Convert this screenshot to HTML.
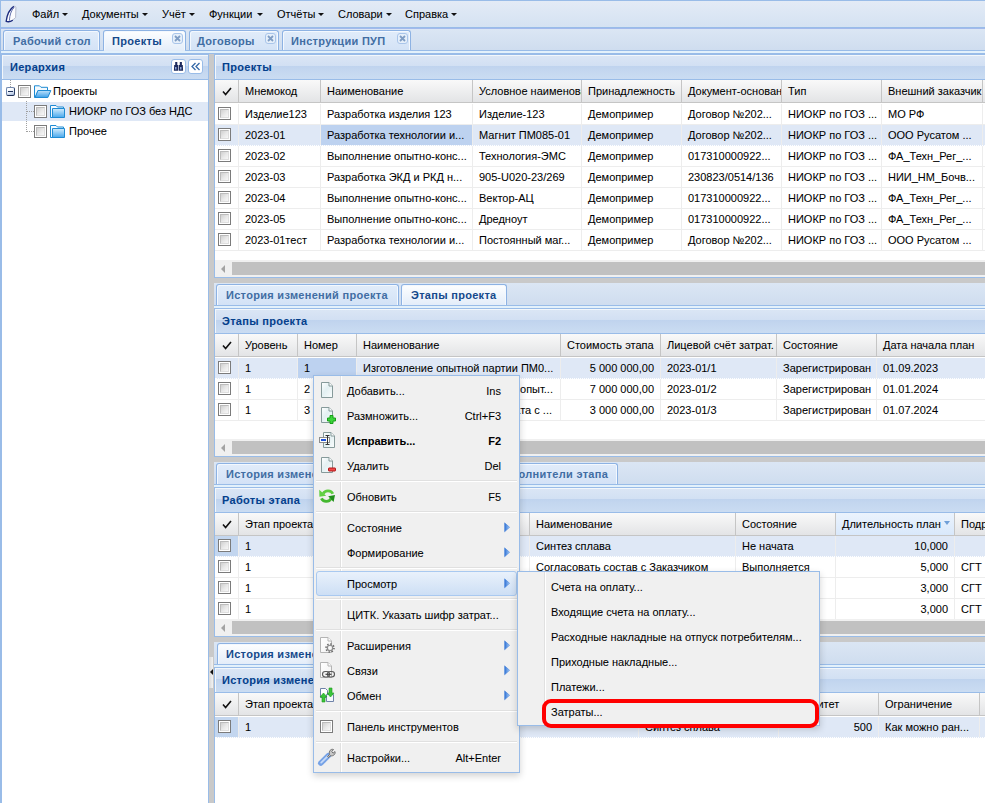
<!DOCTYPE html><html><head><meta charset="utf-8"><style>
*{box-sizing:border-box}
html,body{margin:0;padding:0}
body{width:985px;height:803px;overflow:hidden;position:relative;background:#fff;
 font-family:"Liberation Sans",sans-serif;font-size:11px;color:#000}
.a{position:absolute}
.t{position:absolute;white-space:nowrap;line-height:13px;-webkit-text-stroke-width:0.05px}
.b{font-weight:bold;letter-spacing:0.3px}
/* toolbar */
#tb{left:0;top:0;width:985px;height:28px;border-top:1px solid #99bce8;border-left:1px solid #99bce8;border-bottom:1px solid #99bce8;
 background:linear-gradient(#e3ebf6,#d5e2f2)}
.mi{color:#000}
.arr{position:absolute;width:0;height:0;border-left:3px solid transparent;border-right:3px solid transparent;border-top:3px solid #111}
/* tab bar */
.tbar{position:absolute;left:214px;width:771px;height:22px;background:linear-gradient(#dbe6f4,#cfddef)}
.tab{position:absolute;height:21px;border:1px solid #8db2e3;border-bottom:0;border-radius:3px 3px 0 0;
 background:linear-gradient(#e1ecfa,#d3e2f6);box-shadow:inset 1px 1px 0 #f3f8fe,inset -1px 0 0 #f3f8fe}
.tab.act{background:linear-gradient(#fdfeff,#e2ecf9);height:22px}
.tabt{position:absolute;top:4px;font-weight:bold;letter-spacing:0.3px;color:#416da3;white-space:nowrap;line-height:13px}
.tab.act .tabt{color:#15498b}
.close{position:absolute;width:11px;height:11px;border:1px solid #a9c5ea;border-radius:3px;background:#e6effa}
.strip{position:absolute;left:214px;width:771px;height:3px;border-top:1px solid #99bce8;background:#e3f1fb}
/* panel header */
.ph{position:absolute;height:26px;border:1px solid #99bce8;
 background:linear-gradient(#dbe6f5 0%,#d2e0f3 45%,#bfd3ee 46%,#c3d6ef 60%,#cadcf2 100%);
 box-shadow:inset 0 1px 0 #f3f7fb,inset 1px 0 0 #f3f7fb}
.pht{position:absolute;left:7px;top:6px;font-weight:bold;letter-spacing:0.3px;color:#04408c;line-height:13px;white-space:nowrap}
/* grid */
.gh{position:absolute;height:23px;background:linear-gradient(#f9f9f9,#e3e4e6);border-bottom:1px solid #c5c5c5}
.ghc{position:absolute;top:0;height:22px;border-right:1px solid #c5c5c5;overflow:hidden}
.ghc span{position:absolute;left:6px;top:5px;white-space:nowrap;line-height:13px;color:#000;-webkit-text-stroke-width:0.05px}
.row{position:absolute;height:21px;border-bottom:1px solid #ededed;background:#fff}
.row.sel{background:#dfe8f6;border-bottom:1px dotted #fff}
.cell{position:absolute;top:0;height:20px;border-right:1px solid #ededed;overflow:hidden}
.cell span{position:absolute;left:6px;top:4px;white-space:nowrap;line-height:13px;-webkit-text-stroke-width:0.05px}
.cell.r span{left:auto;right:6px}
.cell.fc{background:#c3d6ef}
.chk{position:absolute;width:13px;height:13px;border:1px solid #7b7b7b;background:#fff}
.chk::after{content:'';position:absolute;left:1px;top:1px;width:9px;height:9px;box-sizing:border-box;border:1px solid;border-color:#bcbcbc #dedede #dedede #bcbcbc;background:linear-gradient(135deg,#d0d0d0 0%,#e9e9e9 55%,#f7f7f7 100%)}
.hs{position:absolute;height:17px;background:#f0f0f0}
.hs .th{position:absolute;left:17px;right:0;top:2px;height:13px;background:#c1c1c1}
.hs .la{position:absolute;left:6px;top:5px;width:0;height:0;border-top:4px solid transparent;border-bottom:4px solid transparent;border-right:4px solid #a3a3a3}
/* menu */
.menu{position:absolute;background:#f0f0f0;border:1px solid #99bce8;box-shadow:0 3px 7px rgba(0,0,0,0.18)}
.msep{position:absolute;height:2px;border-top:1px solid #e0e0e0;background:#fff}
.mvs{position:absolute;width:2px;border-left:1px solid #e0e0e0;background:#fff}
.mt{position:absolute;white-space:nowrap;line-height:13px;color:#000;-webkit-text-stroke-width:0.05px}
.marr{position:absolute;width:0;height:0;border-top:4.5px solid transparent;border-bottom:4.5px solid transparent;border-left:5px solid #3d8ae0}
</style></head><body>
<div id="tb" class="a"></div>
<svg class="a" style="left:0;top:0" width="22" height="26" viewBox="0 0 22 26">
<path d="M14.8 6 C10.5 8.5 7.2 14.5 6 21.6 C8.5 22.3 11.5 21.6 15.6 17.5 L15.9 7.5 Z" fill="#fbfcfe" stroke="#a4abc0" stroke-width="0.8"/>
<path d="M13.8 6.4 C9.6 9.2 6.9 15.2 6.2 21.4 C8.2 22 10.8 21.6 12.8 20.3" fill="none" stroke="#1b2a7e" stroke-width="1.3"/>
<path d="M14.2 7.4 C11.2 10.2 9.6 15.2 9.4 20.6" fill="none" stroke="#5262a6" stroke-width="0.9"/>
</svg>
<div class="t mi" style="left:32px;top:8px;">Файл</div>
<div class="arr" style="left:62px;top:13px"></div>
<div class="t mi" style="left:82px;top:8px;">Документы</div>
<div class="arr" style="left:142px;top:13px"></div>
<div class="t mi" style="left:162px;top:8px;">Учёт</div>
<div class="arr" style="left:189px;top:13px"></div>
<div class="t mi" style="left:209px;top:8px;">Функции</div>
<div class="arr" style="left:257px;top:13px"></div>
<div class="t mi" style="left:277px;top:8px;">Отчёты</div>
<div class="arr" style="left:318px;top:13px"></div>
<div class="t mi" style="left:338px;top:8px;">Словари</div>
<div class="arr" style="left:386px;top:13px"></div>
<div class="t mi" style="left:405px;top:8px;">Справка</div>
<div class="arr" style="left:451px;top:13px"></div>
<div class="a" style="left:0;top:28px;width:985px;height:22px;background:linear-gradient(#dbe6f4,#cfddef);border-left:1px solid #99bce8;border-top:1px solid #a3b9ec"></div>
<div class="tab" style="left:3px;top:30px;width:97px">
<div class="tabt" style="left:9px">Рабочий стол</div>
</div>
<div class="tab act" style="left:103px;top:30px;width:83px">
<div class="tabt" style="left:8px">Проекты</div>
<div class="close" style="left:68px;top:2px"><svg width="9" height="9" style="position:absolute;left:0;top:0"><path d="M2 2L7 7M7 2L2 7" stroke="#7f9dc4" stroke-width="1.8"/></svg></div>
</div>
<div class="tab" style="left:189px;top:30px;width:90px">
<div class="tabt" style="left:7px">Договоры</div>
<div class="close" style="left:75px;top:2px"><svg width="9" height="9" style="position:absolute;left:0;top:0"><path d="M2 2L7 7M7 2L2 7" stroke="#7f9dc4" stroke-width="1.8"/></svg></div>
</div>
<div class="tab" style="left:282px;top:30px;width:129px">
<div class="tabt" style="left:8px">Инструкции ПУП</div>
<div class="close" style="left:114px;top:2px"><svg width="9" height="9" style="position:absolute;left:0;top:0"><path d="M2 2L7 7M7 2L2 7" stroke="#7f9dc4" stroke-width="1.8"/></svg></div>
</div>
<div class="a" style="left:0;top:50px;width:985px;height:4px;border-top:1px solid #99bce8;border-bottom:1px solid #99bce8;background:#e3f1fb;border-left:1px solid #99bce8"></div>
<div class="a" style="left:104px;top:50px;width:81px;height:1px;background:#e2ecf9"></div>
<div class="a" style="left:0;top:54px;width:209px;height:760px;border:1px solid #99bce8;border-left:2px solid #99bce8;background:#fff"></div>
<div class="ph" style="left:0;top:54px;width:209px;height:26px;border-left:2px solid #99bce8"></div>
<div class="t b" style="left:10px;top:61px;color:#04408c">Иерархия</div>
<div class="a" style="left:171px;top:59px;width:15px;height:15px;border:1px solid #99bce8;border-radius:3px;background:#fff"></div>
<div class="a" style="left:188px;top:59px;width:15px;height:15px;border:1px solid #99bce8;border-radius:3px;background:#fff"></div>
<svg class="a" style="left:173px;top:61px" width="11" height="11" viewBox="0 0 11 11">
<path d="M2.2 1 H4.3 V4 H5.3 V9.8 H0.9 L1.2 4 H2.2 Z" fill="#1e2b5e"/>
<path d="M6.8 1 H8.9 V4 H9.8 L10.1 9.8 H5.9 V4 H6.8 Z" fill="#1e2b5e"/>
<rect x="2.2" y="6" width="1.2" height="2.5" fill="#a9c3f5"/><rect x="7.2" y="6" width="1.2" height="2.5" fill="#a9c3f5"/>
</svg>
<svg class="a" style="left:191px;top:62px" width="10" height="9" viewBox="0 0 10 9">
<path d="M4.5 1 L1 4.5 L4.5 8 M8.5 1 L5 4.5 L8.5 8" fill="none" stroke="#3569a8" stroke-width="1.3"/>
</svg>
<div class="a" style="left:2px;top:102px;width:206px;height:19px;background:#dfe8f6"></div>
<div class="a" style="left:10px;top:80px;width:1px;height:7px;border-left:1px dotted #a0a0a0"></div>
<div class="a" style="left:26px;top:101px;width:1px;height:31px;border-left:1px dotted #a0a0a0"></div>
<div class="a" style="left:27px;top:111px;width:7px;height:1px;border-top:1px dotted #a0a0a0"></div>
<div class="a" style="left:27px;top:131px;width:7px;height:1px;border-top:1px dotted #a0a0a0"></div>
<div class="a" style="left:6px;top:87px;width:9px;height:9px;border:1px solid;border-color:#6f86ad #2b3f66 #1e2f55 #6f86ad;border-radius:2px;background:linear-gradient(160deg,#ffffff 20%,#dfe9f7 60%,#9fb4d6 100%)"></div>
<div class="a" style="left:8px;top:91px;width:5px;height:1px;background:#1b2f5a"></div>
<div class="chk" style="left:18px;top:85px"></div>
<svg class="a" style="left:34px;top:85px" width="18" height="14" viewBox="0 0 18 14">
<defs><linearGradient id="fo3485" x1="0" y1="0" x2="0" y2="1"><stop offset="0" stop-color="#bfe2fb"/><stop offset="1" stop-color="#3d9fe8"/></linearGradient></defs>
<path d="M0.5 0.8 H5.5 L7 2.3 H13.5 V5.5 H4 L1.5 12.5 H0.5 Z" fill="#f2f9fe" stroke="#1f8bd3"/>
<path d="M4 5.5 H16.8 L13.8 12.5 H1 Z" fill="url(#fo3485)" stroke="#1f8bd3" stroke-linejoin="round"/>
</svg>
<div class="t " style="left:53px;top:85px;">Проекты</div>
<div class="chk" style="left:34px;top:105px"></div>
<svg class="a" style="left:50px;top:105px" width="16" height="14" viewBox="0 0 16 14">
<defs><linearGradient id="fc50105" x1="0" y1="0" x2="0" y2="1"><stop offset="0" stop-color="#d2ecfd"/><stop offset="1" stop-color="#48a8ec"/></linearGradient></defs>
<path d="M0.5 0.5 H6 L7.5 2 H13.5 V12.5 H0.5 Z" fill="#f4faff" stroke="#1f8bd3" stroke-linejoin="round"/>
<path d="M2.5 3.5 H14.5 V12.5 H2.5 Z" fill="url(#fc50105)" stroke="#1f8bd3" stroke-linejoin="round"/>
</svg>
<div class="t " style="left:69px;top:105px;">НИОКР по ГОЗ без НДС</div>
<div class="chk" style="left:34px;top:125px"></div>
<svg class="a" style="left:50px;top:125px" width="16" height="14" viewBox="0 0 16 14">
<defs><linearGradient id="fc50125" x1="0" y1="0" x2="0" y2="1"><stop offset="0" stop-color="#d2ecfd"/><stop offset="1" stop-color="#48a8ec"/></linearGradient></defs>
<path d="M0.5 0.5 H6 L7.5 2 H13.5 V12.5 H0.5 Z" fill="#f4faff" stroke="#1f8bd3" stroke-linejoin="round"/>
<path d="M2.5 3.5 H14.5 V12.5 H2.5 Z" fill="url(#fc50125)" stroke="#1f8bd3" stroke-linejoin="round"/>
</svg>
<div class="t " style="left:69px;top:125px;">Прочее</div>
<div class="a" style="left:209px;top:54px;width:5px;height:749px;background:#c9c9c9"></div>
<div class="a" style="left:214px;top:54px;width:771px;height:224px;border-left:1px solid #99bce8;background:#fff"></div>
<div class="a" style="left:214px;top:277px;width:771px;height:1px;background:#99bce8"></div>
<div class="ph" style="left:214px;top:54px;width:771px;height:26px;border-right:0"></div>
<div class="t b" style="left:222px;top:61px;color:#04408c">Проекты</div>
<div class="gh" style="left:215px;top:80px;width:770px;height:23px">
<div class="ghc" style="left:24px;width:82px;height:22px;"><span>Мнемокод</span></div>
<div class="ghc" style="left:106px;width:152px;height:22px;"><span>Наименование</span></div>
<div class="ghc" style="left:258px;width:109px;height:22px;"><span>Условное наименование</span></div>
<div class="ghc" style="left:367px;width:100px;height:22px;"><span>Принадлежность</span></div>
<div class="ghc" style="left:467px;width:100px;height:22px;"><span>Документ-основание</span></div>
<div class="ghc" style="left:567px;width:100px;height:22px;"><span>Тип</span></div>
<div class="ghc" style="left:667px;width:101px;height:22px;"><span>Внешний заказчик</span></div>
<div class="ghc" style="left:768px;width:118px;height:22px;"><span></span></div>
</div>
<div class="a" style="left:238px;top:80px;width:1px;height:22px;background:#c5c5c5"></div>
<svg class="a" style="left:222px;top:87px" width="10" height="9" viewBox="0 0 10 9"><path d="M1 4.6 L3.6 7.6 L9 1" fill="none" stroke="#111" stroke-width="1.6"/></svg>
<div class="row" style="left:215px;top:104px;width:770px;height:21px">
<div class="cell" style="left:0;width:24px;"></div>
<div class="chk" style="left:3px;top:3px"></div>
<div class="cell" style="left:24px;width:82px;"><span style="">Изделие123</span></div>
<div class="cell" style="left:106px;width:152px;"><span style="">Разработка изделия 123</span></div>
<div class="cell" style="left:258px;width:109px;"><span style="">Изделие-123</span></div>
<div class="cell" style="left:367px;width:100px;"><span style="">Демопример</span></div>
<div class="cell" style="left:467px;width:100px;"><span style="">Договор №202...</span></div>
<div class="cell" style="left:567px;width:100px;"><span style="">НИОКР по ГОЗ ...</span></div>
<div class="cell" style="left:667px;width:101px;"><span style="">МО РФ</span></div>
<div class="cell" style="left:768px;width:118px;"><span style=""></span></div>
</div>
<div class="row sel" style="left:215px;top:125px;width:770px;height:21px">
<div class="cell" style="left:0;width:24px;"></div>
<div class="chk" style="left:3px;top:3px"></div>
<div class="cell" style="left:24px;width:82px;"><span style="">2023-01</span></div>
<div class="cell" style="left:106px;width:152px;background:#bdd2f0;"><span style="">Разработка технологии и...</span></div>
<div class="cell" style="left:258px;width:109px;"><span style="">Магнит ПМ085-01</span></div>
<div class="cell" style="left:367px;width:100px;"><span style="">Демопример</span></div>
<div class="cell" style="left:467px;width:100px;"><span style="">Договор №202...</span></div>
<div class="cell" style="left:567px;width:100px;"><span style="">НИОКР по ГОЗ ...</span></div>
<div class="cell" style="left:667px;width:101px;"><span style="">ООО Русатом ...</span></div>
<div class="cell" style="left:768px;width:118px;"><span style=""></span></div>
</div>
<div class="row" style="left:215px;top:146px;width:770px;height:21px">
<div class="cell" style="left:0;width:24px;"></div>
<div class="chk" style="left:3px;top:3px"></div>
<div class="cell" style="left:24px;width:82px;"><span style="">2023-02</span></div>
<div class="cell" style="left:106px;width:152px;"><span style="">Выполнение опытно-конс...</span></div>
<div class="cell" style="left:258px;width:109px;"><span style="">Технология-ЭМС</span></div>
<div class="cell" style="left:367px;width:100px;"><span style="">Демопример</span></div>
<div class="cell" style="left:467px;width:100px;"><span style="">017310000922...</span></div>
<div class="cell" style="left:567px;width:100px;"><span style="">НИОКР по ГОЗ ...</span></div>
<div class="cell" style="left:667px;width:101px;"><span style="">ФА_Техн_Рег_...</span></div>
<div class="cell" style="left:768px;width:118px;"><span style=""></span></div>
</div>
<div class="row" style="left:215px;top:167px;width:770px;height:21px">
<div class="cell" style="left:0;width:24px;"></div>
<div class="chk" style="left:3px;top:3px"></div>
<div class="cell" style="left:24px;width:82px;"><span style="">2023-03</span></div>
<div class="cell" style="left:106px;width:152px;"><span style="">Разработка ЭКД и РКД н...</span></div>
<div class="cell" style="left:258px;width:109px;"><span style="">905-U020-23/269</span></div>
<div class="cell" style="left:367px;width:100px;"><span style="">Демопример</span></div>
<div class="cell" style="left:467px;width:100px;"><span style="">230823/0514/136</span></div>
<div class="cell" style="left:567px;width:100px;"><span style="">НИОКР по ГОЗ ...</span></div>
<div class="cell" style="left:667px;width:101px;"><span style="">НИИ_НМ_Бочв...</span></div>
<div class="cell" style="left:768px;width:118px;"><span style=""></span></div>
</div>
<div class="row" style="left:215px;top:188px;width:770px;height:21px">
<div class="cell" style="left:0;width:24px;"></div>
<div class="chk" style="left:3px;top:3px"></div>
<div class="cell" style="left:24px;width:82px;"><span style="">2023-04</span></div>
<div class="cell" style="left:106px;width:152px;"><span style="">Выполнение опытно-конс...</span></div>
<div class="cell" style="left:258px;width:109px;"><span style="">Вектор-АЦ</span></div>
<div class="cell" style="left:367px;width:100px;"><span style="">Демопример</span></div>
<div class="cell" style="left:467px;width:100px;"><span style="">017310000922...</span></div>
<div class="cell" style="left:567px;width:100px;"><span style="">НИОКР по ГОЗ ...</span></div>
<div class="cell" style="left:667px;width:101px;"><span style="">ФА_Техн_Рег_...</span></div>
<div class="cell" style="left:768px;width:118px;"><span style=""></span></div>
</div>
<div class="row" style="left:215px;top:209px;width:770px;height:21px">
<div class="cell" style="left:0;width:24px;"></div>
<div class="chk" style="left:3px;top:3px"></div>
<div class="cell" style="left:24px;width:82px;"><span style="">2023-05</span></div>
<div class="cell" style="left:106px;width:152px;"><span style="">Выполнение опытно-конс...</span></div>
<div class="cell" style="left:258px;width:109px;"><span style="">Дредноут</span></div>
<div class="cell" style="left:367px;width:100px;"><span style="">Демопример</span></div>
<div class="cell" style="left:467px;width:100px;"><span style="">017310000922...</span></div>
<div class="cell" style="left:567px;width:100px;"><span style="">НИОКР по ГОЗ ...</span></div>
<div class="cell" style="left:667px;width:101px;"><span style="">ФА_Техн_Рег_...</span></div>
<div class="cell" style="left:768px;width:118px;"><span style=""></span></div>
</div>
<div class="row" style="left:215px;top:230px;width:770px;height:21px">
<div class="cell" style="left:0;width:24px;"></div>
<div class="chk" style="left:3px;top:3px"></div>
<div class="cell" style="left:24px;width:82px;"><span style="">2023-01тест</span></div>
<div class="cell" style="left:106px;width:152px;"><span style="">Разработка технологии и...</span></div>
<div class="cell" style="left:258px;width:109px;"><span style="">Постоянный маг...</span></div>
<div class="cell" style="left:367px;width:100px;"><span style="">Демопример</span></div>
<div class="cell" style="left:467px;width:100px;"><span style="">Договор №202...</span></div>
<div class="cell" style="left:567px;width:100px;"><span style="">НИОКР по ГОЗ ...</span></div>
<div class="cell" style="left:667px;width:101px;"><span style="">ООО Русатом ...</span></div>
<div class="cell" style="left:768px;width:118px;"><span style=""></span></div>
</div>
<div class="hs" style="left:215px;top:260px;width:770px"><div class="la"></div><div class="th"></div></div>
<div class="a" style="left:214px;top:278px;width:771px;height:5px;background:#c9c9c9"></div>
<div class="tbar" style="top:283px"></div>
<div class="tab" style="left:216px;top:284px;width:183px">
<div class="tabt" style="left:9px">История изменений проекта</div>
</div>
<div class="tab act" style="left:401px;top:284px;width:106px">
<div class="tabt" style="left:9px">Этапы проекта</div>
</div>
<div class="strip" style="top:305px"></div>
<div class="a" style="left:214px;top:308px;width:771px;height:149px;border-left:1px solid #99bce8;background:#fff"></div>
<div class="a" style="left:214px;top:456px;width:771px;height:1px;background:#99bce8"></div>
<div class="ph" style="left:214px;top:308px;width:771px;height:26px;border-right:0"></div>
<div class="t b" style="left:222px;top:315px;color:#04408c">Этапы проекта</div>
<div class="gh" style="left:215px;top:334px;width:770px;height:23px">
<div class="ghc" style="left:24px;width:59px;height:22px;"><span>Уровень</span></div>
<div class="ghc" style="left:83px;width:59px;height:22px;"><span>Номер</span></div>
<div class="ghc" style="left:142px;width:204px;height:22px;"><span>Наименование</span></div>
<div class="ghc" style="left:346px;width:100px;height:22px;"><span>Стоимость этапа</span></div>
<div class="ghc" style="left:446px;width:116px;height:22px;"><span>Лицевой счёт затрат.</span></div>
<div class="ghc" style="left:562px;width:100px;height:22px;"><span>Состояние</span></div>
<div class="ghc" style="left:662px;width:224px;height:22px;"><span>Дата начала план</span></div>
</div>
<div class="a" style="left:238px;top:334px;width:1px;height:22px;background:#c5c5c5"></div>
<svg class="a" style="left:222px;top:341px" width="10" height="9" viewBox="0 0 10 9"><path d="M1 4.6 L3.6 7.6 L9 1" fill="none" stroke="#111" stroke-width="1.6"/></svg>
<div class="row sel" style="left:215px;top:358px;width:770px;height:21px">
<div class="cell" style="left:0;width:24px;"></div>
<div class="chk" style="left:3px;top:3px"></div>
<div class="cell" style="left:24px;width:59px;"><span style="">1</span></div>
<div class="cell" style="left:83px;width:59px;background:#bdd2f0;"><span style="">1</span></div>
<div class="cell" style="left:142px;width:204px;"><span style="">Изготовление опытной партии ПМ0...</span></div>
<div class="cell r" style="left:346px;width:100px;"><span style="">5 000 000,00</span></div>
<div class="cell" style="left:446px;width:116px;"><span style="">2023-01/1</span></div>
<div class="cell" style="left:562px;width:100px;"><span style="">Зарегистрирован</span></div>
<div class="cell" style="left:662px;width:224px;"><span style="">01.09.2023</span></div>
</div>
<div class="row" style="left:215px;top:379px;width:770px;height:21px">
<div class="cell" style="left:0;width:24px;"></div>
<div class="chk" style="left:3px;top:3px"></div>
<div class="cell" style="left:24px;width:59px;"><span style="">1</span></div>
<div class="cell" style="left:83px;width:59px;"><span style="">2</span></div>
<div class="cell" style="left:142px;width:204px;"><span style="left:auto;right:7px">Изготовление опытной партии опыт...</span></div>
<div class="cell r" style="left:346px;width:100px;"><span style="">7 000 000,00</span></div>
<div class="cell" style="left:446px;width:116px;"><span style="">2023-01/2</span></div>
<div class="cell" style="left:562px;width:100px;"><span style="">Зарегистрирован</span></div>
<div class="cell" style="left:662px;width:224px;"><span style="">01.01.2024</span></div>
</div>
<div class="row" style="left:215px;top:400px;width:770px;height:21px">
<div class="cell" style="left:0;width:24px;"></div>
<div class="chk" style="left:3px;top:3px"></div>
<div class="cell" style="left:24px;width:59px;"><span style="">1</span></div>
<div class="cell" style="left:83px;width:59px;"><span style="">3</span></div>
<div class="cell" style="left:142px;width:204px;"><span style="left:auto;right:8px">Разработка и согласование плата с ...</span></div>
<div class="cell r" style="left:346px;width:100px;"><span style="">3 000 000,00</span></div>
<div class="cell" style="left:446px;width:116px;"><span style="">2023-01/3</span></div>
<div class="cell" style="left:562px;width:100px;"><span style="">Зарегистрирован</span></div>
<div class="cell" style="left:662px;width:224px;"><span style="">01.07.2024</span></div>
</div>
<div class="hs" style="left:215px;top:439px;width:770px"><div class="la"></div><div class="th"></div></div>
<div class="a" style="left:214px;top:457px;width:771px;height:5px;background:#c9c9c9"></div>
<div class="tbar" style="top:462px"></div>
<div class="tab" style="left:216px;top:463px;width:170px">
<div class="tabt" style="left:9px">История изменений этапа</div>
</div>
<div class="tab act" style="left:389px;top:463px;width:100px">
<div class="tabt" style="left:8px">Работы этапа</div>
</div>
<div class="tab" style="left:492px;top:463px;width:126px">
<div class="tabt" style="left:4px">Исполнители этапа</div>
</div>
<div class="strip" style="top:484px"></div>
<div class="a" style="left:214px;top:487px;width:771px;height:150px;border-left:1px solid #99bce8;background:#fff"></div>
<div class="a" style="left:214px;top:636px;width:771px;height:1px;background:#99bce8"></div>
<div class="ph" style="left:214px;top:487px;width:771px;height:26px;border-right:0"></div>
<div class="t b" style="left:222px;top:494px;color:#04408c">Работы этапа</div>
<div class="gh" style="left:215px;top:513px;width:770px;height:23px">
<div class="ghc" style="left:24px;width:291px;height:22px;"><span>Этап проекта</span></div>
<div class="ghc" style="left:315px;width:206px;height:22px;"><span>Наименование</span></div>
<div class="ghc" style="left:521px;width:100px;height:22px;"><span>Состояние</span></div>
<div class="ghc" style="left:621px;width:119px;height:22px;background:linear-gradient(#ebf3fd,#d9e8fb)"><span>Длительность план</span></div>
<div class="ghc" style="left:740px;width:146px;height:22px;"><span>Подразделение</span></div>
</div>
<div class="a" style="left:238px;top:513px;width:1px;height:22px;background:#c5c5c5"></div>
<svg class="a" style="left:222px;top:520px" width="10" height="9" viewBox="0 0 10 9"><path d="M1 4.6 L3.6 7.6 L9 1" fill="none" stroke="#111" stroke-width="1.6"/></svg>
<div class="a" style="left:944px;top:521px;width:0;height:0;border-left:3.5px solid transparent;border-right:3.5px solid transparent;border-top:4px solid #6f9fd8"></div>
<div class="row sel" style="left:215px;top:536px;width:770px;height:21px">
<div class="cell" style="left:0;width:24px;background:#c3d6ef;"></div>
<div class="chk" style="left:3px;top:3px"></div>
<div class="cell" style="left:24px;width:291px;"><span style="">1</span></div>
<div class="cell" style="left:315px;width:206px;"><span style="">Синтез сплава</span></div>
<div class="cell" style="left:521px;width:100px;"><span style="">Не начата</span></div>
<div class="cell r" style="left:621px;width:119px;"><span style="">10,000</span></div>
<div class="cell" style="left:740px;width:146px;"><span style=""></span></div>
</div>
<div class="row" style="left:215px;top:557px;width:770px;height:21px">
<div class="cell" style="left:0;width:24px;"></div>
<div class="chk" style="left:3px;top:3px"></div>
<div class="cell" style="left:24px;width:291px;"><span style="">1</span></div>
<div class="cell" style="left:315px;width:206px;"><span style="">Согласовать состав с Заказчиком</span></div>
<div class="cell" style="left:521px;width:100px;"><span style="">Выполняется</span></div>
<div class="cell r" style="left:621px;width:119px;"><span style="">5,000</span></div>
<div class="cell" style="left:740px;width:146px;"><span style="">СГТ</span></div>
</div>
<div class="row" style="left:215px;top:578px;width:770px;height:21px">
<div class="cell" style="left:0;width:24px;"></div>
<div class="chk" style="left:3px;top:3px"></div>
<div class="cell" style="left:24px;width:291px;"><span style="">1</span></div>
<div class="cell" style="left:315px;width:206px;"><span style="">Изготовление слитков</span></div>
<div class="cell" style="left:521px;width:100px;"><span style="">Не начата</span></div>
<div class="cell r" style="left:621px;width:119px;"><span style="">3,000</span></div>
<div class="cell" style="left:740px;width:146px;"><span style="">СГТ</span></div>
</div>
<div class="row" style="left:215px;top:599px;width:770px;height:21px">
<div class="cell" style="left:0;width:24px;"></div>
<div class="chk" style="left:3px;top:3px"></div>
<div class="cell" style="left:24px;width:291px;"><span style="">1</span></div>
<div class="cell" style="left:315px;width:206px;"><span style="">Исследование свойств</span></div>
<div class="cell" style="left:521px;width:100px;"><span style="">Не начата</span></div>
<div class="cell r" style="left:621px;width:119px;"><span style="">3,000</span></div>
<div class="cell" style="left:740px;width:146px;"><span style="">СГТ</span></div>
</div>
<div class="hs" style="left:215px;top:619px;width:770px"><div class="la"></div><div class="th"></div></div>
<div class="a" style="left:214px;top:637px;width:771px;height:5px;background:#c9c9c9"></div>
<div class="tbar" style="top:642px"></div>
<div class="tab act" style="left:217px;top:643px;width:183px">
<div class="tabt" style="left:8px">История изменений работы</div>
</div>
<div class="tab" style="left:402px;top:643px;width:216px">
<div class="tabt" style="left:9px">Ресурсы работы</div>
</div>
<div class="strip" style="top:664px"></div>
<div class="a" style="left:214px;top:667px;width:771px;height:136px;border-left:1px solid #99bce8;background:#fff"></div>
<div class="ph" style="left:214px;top:667px;width:771px;height:26px;border-right:0"></div>
<div class="t b" style="left:222px;top:674px;color:#04408c">История изменений работы</div>
<div class="gh" style="left:215px;top:693px;width:770px;height:23px">
<div class="ghc" style="left:24px;width:400px;height:22px;"><span>Этап проекта</span></div>
<div class="ghc" style="left:424px;width:140px;height:22px;"><span>Наименование</span></div>
<div class="ghc" style="left:564px;width:100px;height:22px;"><span>Приоритет</span></div>
<div class="ghc" style="left:664px;width:101px;height:22px;"><span>Ограничение</span></div>
<div class="ghc" style="left:765px;width:121px;height:22px;"><span></span></div>
</div>
<div class="a" style="left:238px;top:693px;width:1px;height:22px;background:#c5c5c5"></div>
<svg class="a" style="left:222px;top:700px" width="10" height="9" viewBox="0 0 10 9"><path d="M1 4.6 L3.6 7.6 L9 1" fill="none" stroke="#111" stroke-width="1.6"/></svg>
<div class="row sel" style="left:215px;top:717px;width:770px;height:21px">
<div class="cell" style="left:0;width:24px;background:#c3d6ef;"></div>
<div class="chk" style="left:3px;top:3px"></div>
<div class="cell" style="left:24px;width:400px;"><span style="">1</span></div>
<div class="cell" style="left:424px;width:140px;"><span style="">Синтез сплава</span></div>
<div class="cell r" style="left:564px;width:100px;"><span style="">500</span></div>
<div class="cell" style="left:664px;width:101px;"><span style="">Как можно ран...</span></div>
<div class="cell" style="left:765px;width:121px;"><span style=""></span></div>
</div>
<div class="a" style="left:209px;top:657px;width:4px;height:31px;background:linear-gradient(90deg,#d8d8d8,#f2f2f2)"></div>
<div class="a" style="left:210px;top:669px;width:0;height:0;border-top:3px solid transparent;border-bottom:3px solid transparent;border-right:3px solid #111"></div>
<div class="menu" style="left:313px;top:375px;width:207px;height:398px">
<div class="mvs" style="left:26px;top:0;height:396px"></div>
<div class="msep" style="left:2px;top:104px;width:201px"></div>
<div class="msep" style="left:2px;top:135px;width:201px"></div>
<div class="msep" style="left:2px;top:191px;width:201px"></div>
<div class="msep" style="left:2px;top:222px;width:201px"></div>
<div class="msep" style="left:2px;top:253px;width:201px"></div>
<div class="msep" style="left:2px;top:334px;width:201px"></div>
<div class="msep" style="left:2px;top:365px;width:201px"></div>
<div class="mt" style="left:33px;top:9px;">Добавить...</div>
<div class="mt" style="right:18px;top:9px;">Ins</div>
<div class="mt" style="left:33px;top:34px;">Размножить...</div>
<div class="mt" style="right:18px;top:34px;">Ctrl+F3</div>
<div class="mt" style="left:33px;top:59px;font-weight:bold;">Исправить...</div>
<div class="mt" style="right:18px;top:59px;font-weight:bold;">F2</div>
<div class="mt" style="left:33px;top:84px;">Удалить</div>
<div class="mt" style="right:18px;top:84px;">Del</div>
<div class="mt" style="left:33px;top:115px;">Обновить</div>
<div class="mt" style="right:18px;top:115px;">F5</div>
<div class="mt" style="left:33px;top:146px;">Состояние</div>
<svg class="a" style="left:190px;top:146px" width="7" height="11" viewBox="0 0 7 11"><defs><linearGradient id="ma151" x1="0" y1="0" x2="1" y2="0"><stop offset="0" stop-color="#2f72d6"/><stop offset="1" stop-color="#a6cbf4"/></linearGradient></defs><path d="M0.6 0.8 L5.6 5.3 L0.6 9.8 Z" fill="url(#ma151)" stroke="#3a7bd9" stroke-width="0.5"/></svg>
<div class="mt" style="left:33px;top:171px;">Формирование</div>
<svg class="a" style="left:190px;top:171px" width="7" height="11" viewBox="0 0 7 11"><defs><linearGradient id="ma176" x1="0" y1="0" x2="1" y2="0"><stop offset="0" stop-color="#2f72d6"/><stop offset="1" stop-color="#a6cbf4"/></linearGradient></defs><path d="M0.6 0.8 L5.6 5.3 L0.6 9.8 Z" fill="url(#ma176)" stroke="#3a7bd9" stroke-width="0.5"/></svg>
<div class="a" style="left:2px;top:195px;width:201px;height:25px;border:1px solid #a9c9f0;border-radius:3px;background:linear-gradient(#e9f1fb,#cddff5)"></div>
<div class="mt" style="left:33px;top:202px;">Просмотр</div>
<svg class="a" style="left:190px;top:202px" width="7" height="11" viewBox="0 0 7 11"><defs><linearGradient id="ma207" x1="0" y1="0" x2="1" y2="0"><stop offset="0" stop-color="#2f72d6"/><stop offset="1" stop-color="#a6cbf4"/></linearGradient></defs><path d="M0.6 0.8 L5.6 5.3 L0.6 9.8 Z" fill="url(#ma207)" stroke="#3a7bd9" stroke-width="0.5"/></svg>
<div class="mt" style="left:33px;top:233px;">ЦИТК. Указать шифр затрат...</div>
<div class="mt" style="left:33px;top:264px;">Расширения</div>
<svg class="a" style="left:190px;top:264px" width="7" height="11" viewBox="0 0 7 11"><defs><linearGradient id="ma269" x1="0" y1="0" x2="1" y2="0"><stop offset="0" stop-color="#2f72d6"/><stop offset="1" stop-color="#a6cbf4"/></linearGradient></defs><path d="M0.6 0.8 L5.6 5.3 L0.6 9.8 Z" fill="url(#ma269)" stroke="#3a7bd9" stroke-width="0.5"/></svg>
<div class="mt" style="left:33px;top:289px;">Связи</div>
<svg class="a" style="left:190px;top:289px" width="7" height="11" viewBox="0 0 7 11"><defs><linearGradient id="ma294" x1="0" y1="0" x2="1" y2="0"><stop offset="0" stop-color="#2f72d6"/><stop offset="1" stop-color="#a6cbf4"/></linearGradient></defs><path d="M0.6 0.8 L5.6 5.3 L0.6 9.8 Z" fill="url(#ma294)" stroke="#3a7bd9" stroke-width="0.5"/></svg>
<div class="mt" style="left:33px;top:314px;">Обмен</div>
<svg class="a" style="left:190px;top:314px" width="7" height="11" viewBox="0 0 7 11"><defs><linearGradient id="ma319" x1="0" y1="0" x2="1" y2="0"><stop offset="0" stop-color="#2f72d6"/><stop offset="1" stop-color="#a6cbf4"/></linearGradient></defs><path d="M0.6 0.8 L5.6 5.3 L0.6 9.8 Z" fill="url(#ma319)" stroke="#3a7bd9" stroke-width="0.5"/></svg>
<div class="mt" style="left:33px;top:345px;">Панель инструментов</div>
<div class="mt" style="left:33px;top:376px;">Настройки...</div>
<div class="mt" style="right:18px;top:376px;">Alt+Enter</div>
</div>
<svg class="a" style="left:0;top:0;overflow:visible" width="985" height="803"><defs><linearGradient id="pgr" x1="0" y1="0" x2="1" y2="1"><stop offset="0" stop-color="#ffffff"/><stop offset="0.45" stop-color="#e3f0f2"/><stop offset="1" stop-color="#fbfdfd"/></linearGradient><linearGradient id="pgg" x1="0" y1="0" x2="1" y2="1"><stop offset="0" stop-color="#ffffff"/><stop offset="1" stop-color="#f2f2f2"/></linearGradient></defs><path d="M321.5 382.5 H329 L332.5 386 V397.5 H321.5 Z" fill="url(#pgr)" stroke="#869a9a"/><path d="M329 382.5 V386 H332.5" fill="#fff" stroke="#869a9a"/><path d="M321.5 407.5 H329 L332.5 411 V422.5 H321.5 Z" fill="url(#pgr)" stroke="#869a9a"/><path d="M329 407.5 V411 H332.5" fill="#fff" stroke="#869a9a"/><path d="M330 415.5 h3 v2.5 h2.5 v3 h-2.5 v2.5 h-3 v-2.5 h-2.5 v-3 h2.5 z" fill="#3bd43b" stroke="#17a017" stroke-width="1"/><path d="M323.5 432.5 H331 L334.5 436 V447.5 H323.5 Z" fill="url(#pgr)" stroke="#869a9a"/><path d="M331 432.5 V436 H334.5" fill="#fff" stroke="#869a9a"/><rect x="319.5" y="437.5" width="10" height="5" fill="#fdfdf8" stroke="#8c8c8c"/><rect x="321" y="439" width="5" height="2" fill="#1d4fd8"/><path d="M327.5 435 V445 M325.5 435.5 H329.5 M325.5 444.5 H329.5" stroke="#333" stroke-width="1"/><path d="M321.5 457.5 H329 L332.5 461 V472.5 H321.5 Z" fill="url(#pgr)" stroke="#869a9a"/><path d="M329 457.5 V461 H332.5" fill="#fff" stroke="#869a9a"/><rect x="328.5" y="468" width="7" height="3" rx="0.5" fill="#f04848" stroke="#b01818" stroke-width="1"/><path d="M332.8 493.8 A5.2 4.6 0 0 0 323.2 493.6" fill="none" stroke="#5ccc3e" stroke-width="2.8"/><path d="M319.2 489.8 L319.4 496.8 L326.2 495.8 Z" fill="#62d044"/><path d="M321.4 498.4 A5.2 4.6 0 0 0 331 498.6" fill="none" stroke="#44b82e" stroke-width="2.8"/><path d="M335 495 L333.6 502 L328.2 496.2 Z" fill="#1f8f1a"/><path d="M320.5 637.5 H328 L331.5 641 V652.5 H320.5 Z" fill="url(#pgg)" stroke="#b4b4b4"/><path d="M328 637.5 V641 H331.5" fill="#fff" stroke="#b4b4b4"/><circle cx="330" cy="648" r="4" fill="none" stroke="#6a6a6a" stroke-width="1.6" stroke-dasharray="1.4 1.7"/><circle cx="330" cy="648" r="2.7" fill="#eee" stroke="#8a8a8a" stroke-width="1.1"/><rect x="329.2" y="647.2" width="1.6" height="1.6" fill="#fff"/><path d="M320.5 662.5 H328 L331.5 666 V677.5 H320.5 Z" fill="url(#pgg)" stroke="#b4b4b4"/><path d="M328 662.5 V666 H331.5" fill="#fff" stroke="#b4b4b4"/><rect x="322.5" y="671.5" width="7" height="5.5" rx="2.7" fill="#f2f2f2" stroke="#5a5a5a" stroke-width="1.1"/><rect x="327.5" y="671.5" width="7" height="5.5" rx="2.7" fill="none" stroke="#5a5a5a" stroke-width="1.1"/><path d="M325.5 674.3 H331.5" stroke="#444" stroke-width="1.2"/><path d="M320.5 688.5 H325.5 L327.5 690.5 V697.5 H320.5 Z" fill="#fff" stroke="#6f82a8"/><path d="M326.5 694.5 H333.5 V701.5 H326.5 Z" fill="#f4f8fd" stroke="#6f82a8"/><path d="M323.5 693 L327 697 H325 V702 H322 V697 H320 Z" fill="#3ac43a" stroke="#1e9a1e" stroke-width="0.6"/><path d="M330.5 697 L334 693 H332 V688 H329 V693 H327 Z" fill="#3ac43a" stroke="#1e9a1e" stroke-width="0.6"/><path d="M320.8 763.2 L328.3 755.7" stroke="#76a2e6" stroke-width="5.4" stroke-linecap="round"/><path d="M321.2 762.6 L327.8 756.2" stroke="#c6daf8" stroke-width="1.8" stroke-linecap="round"/><path d="M327.5 756.5 L329.5 754.5 C328.5 751 331 748.5 333.5 749.5 L331.8 751.5 L333 753.2 L335 751.5 C335.8 754 333.5 756.5 330 755.8 L328.5 757.5 Z" fill="#c8c8c8" stroke="#666" stroke-width="0.9"/></svg>
<div class="chk" style="left:320px;top:720px"></div>
<div class="menu" style="left:517px;top:571px;width:303px;height:155px">
<div class="mvs" style="left:26px;top:0;height:153px"></div>
<div class="mt" style="left:33px;top:9px">Счета на оплату...</div>
<div class="mt" style="left:33px;top:34px">Входящие счета на оплату...</div>
<div class="mt" style="left:33px;top:59px">Расходные накладные на отпуск потребителям...</div>
<div class="mt" style="left:33px;top:84px">Приходные накладные...</div>
<div class="mt" style="left:33px;top:109px">Платежи...</div>
<div class="mt" style="left:33px;top:134px">Затраты...</div>
</div>
<div class="a" style="left:542px;top:699px;width:277px;height:29px;border:4px solid #f00;border-radius:9px"></div>
</body></html>
